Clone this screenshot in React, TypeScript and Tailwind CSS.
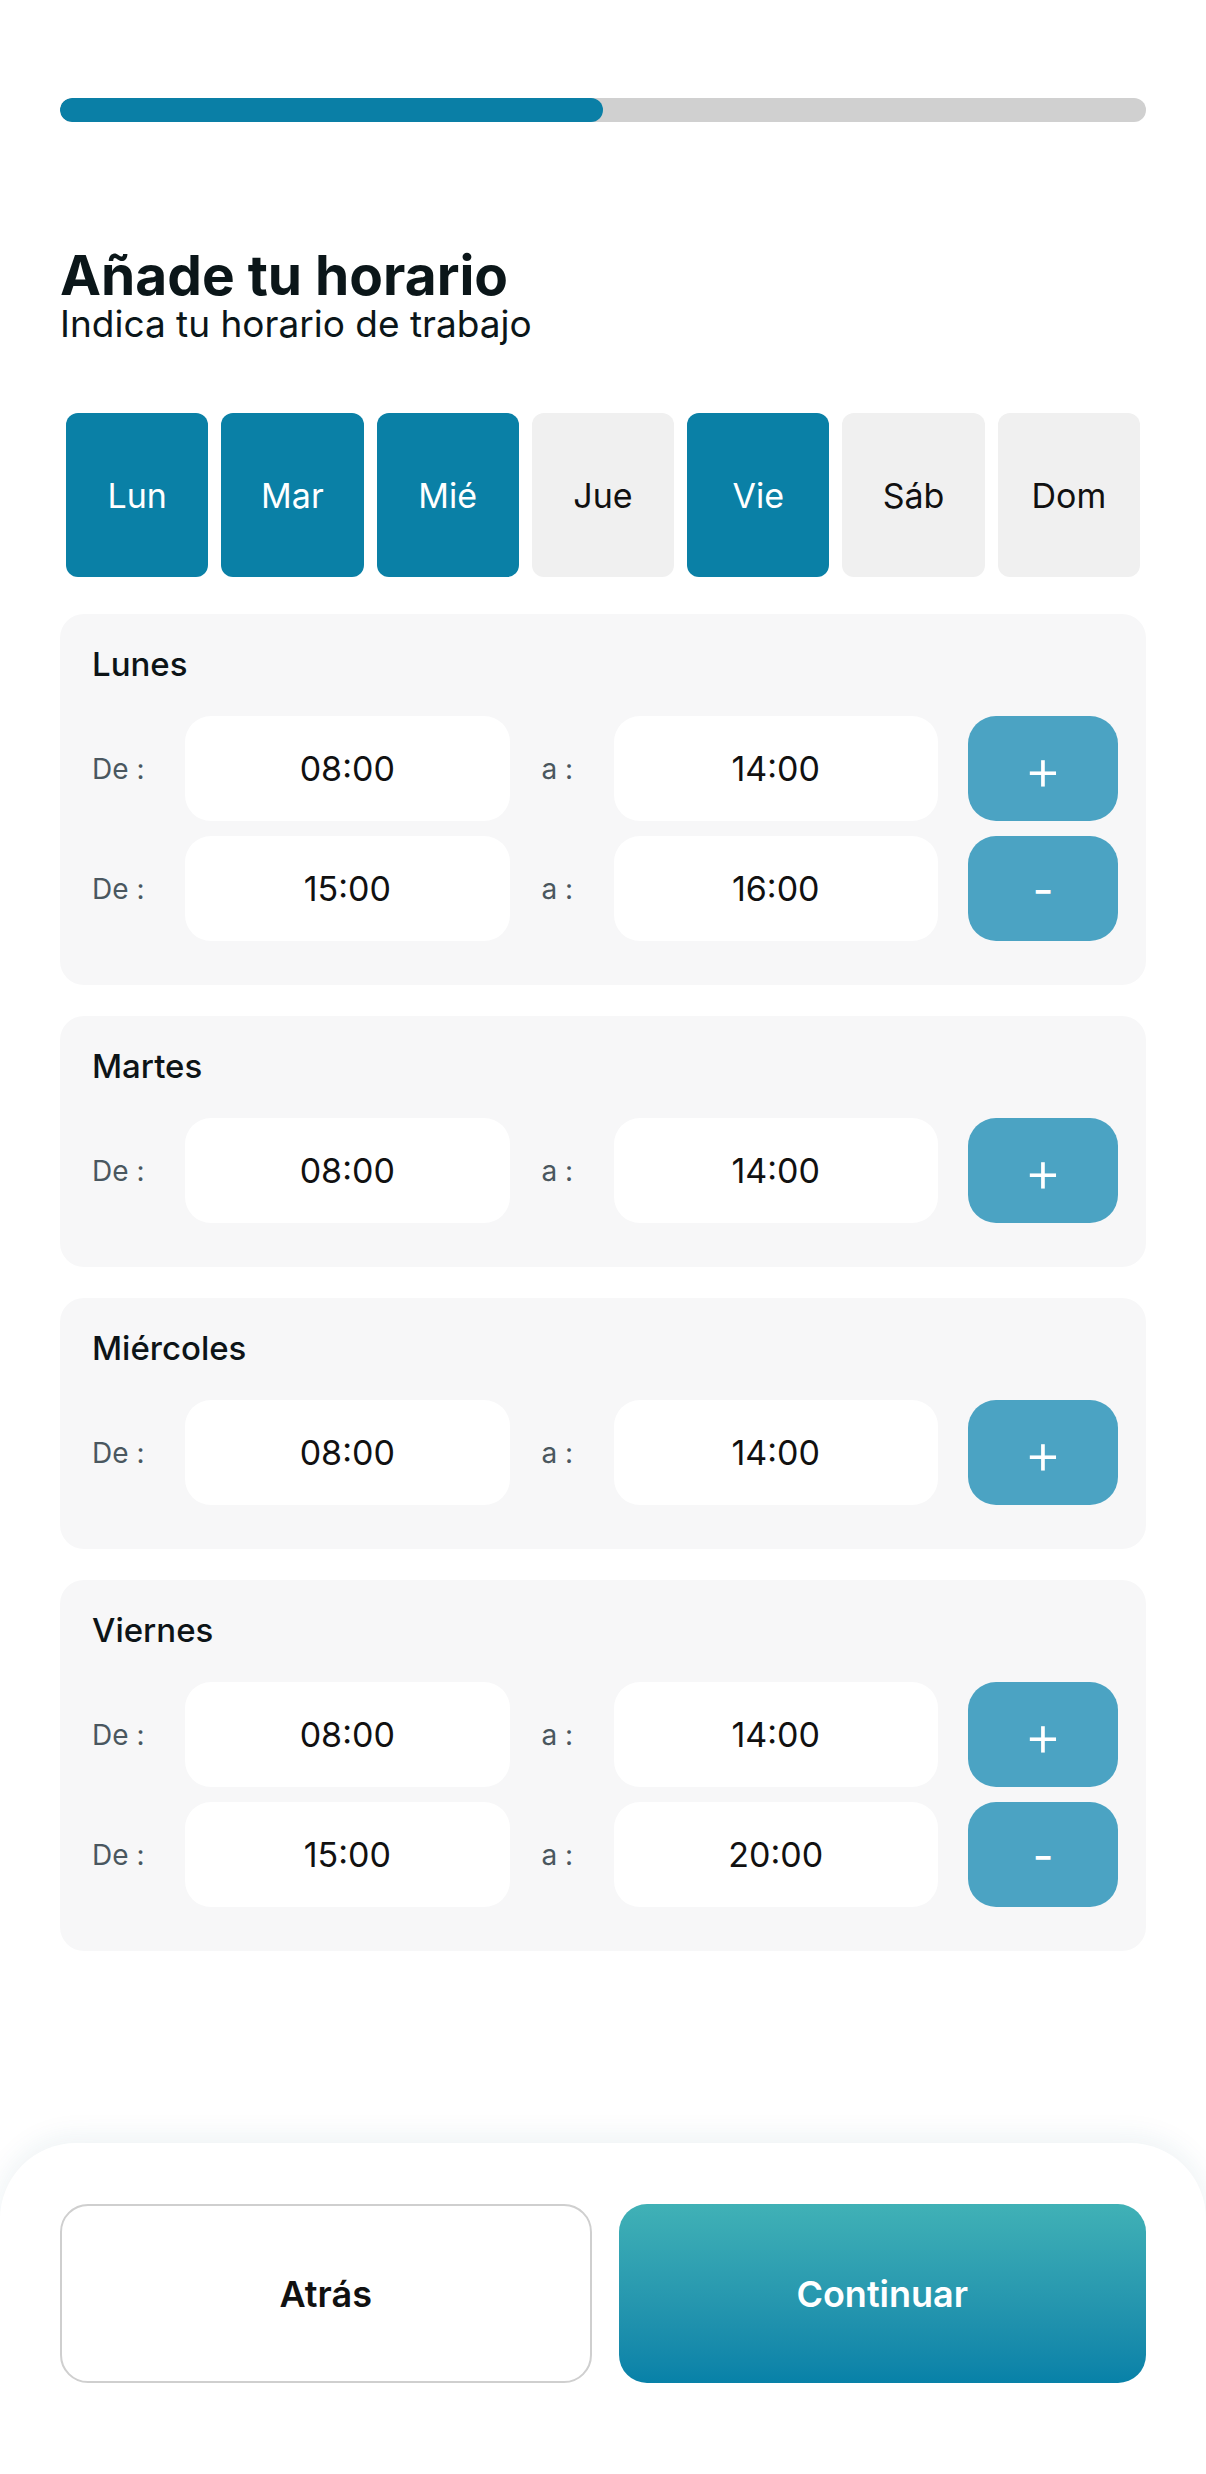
import React from 'react';

type Slot = { from: string; to: string };
type Day = { name: string; slots: Slot[] };

const weekDays = [
  { short: 'Lun', active: true },
  { short: 'Mar', active: true },
  { short: 'Mié', active: true },
  { short: 'Jue', active: false },
  { short: 'Vie', active: true },
  { short: 'Sáb', active: false },
  { short: 'Dom', active: false },
];

const schedule: Day[] = [
  { name: 'Lunes', slots: [{ from: '08:00', to: '14:00' }, { from: '15:00', to: '16:00' }] },
  { name: 'Martes', slots: [{ from: '08:00', to: '14:00' }] },
  { name: 'Miércoles', slots: [{ from: '08:00', to: '14:00' }] },
  { name: 'Viernes', slots: [{ from: '08:00', to: '14:00' }, { from: '15:00', to: '20:00' }] },
];

function TimeBox({ value }: { value: string }) {
  return (
    <div className="flex-1 h-[105px] rounded-[26px] bg-white flex items-center justify-center text-[34px] text-[#111]">
      {value}
    </div>
  );
}

function DayCard({ day }: { day: Day }) {
  return (
    <div className="bg-[#f7f7f8] rounded-[24px] pl-[32px] pr-[28px] pt-[30px] pb-[44px]">
      <div className="text-[33px] leading-[40px] font-medium text-[#0d1417]">{day.name}</div>
      <div className="mt-[32px] flex flex-col gap-[15px]">
        {day.slots.map((slot, i) => (
          <div key={i} className="flex items-center">
            <span className="w-[93px] text-[28px] text-[#4a575f]">De :</span>
            <TimeBox value={slot.from} />
            <span className="w-[104px] pl-[32px] text-[28px] text-[#4a575f]">a :</span>
            <TimeBox value={slot.to} />
            <button className="ml-[30px] w-[150px] h-[105px] rounded-[28px] bg-[#4ba3c3] text-white flex items-center justify-center">
              {i === 0 ? (
                <span className="text-[58px] leading-none font-light">+</span>
              ) : (
                <span className="text-[46px] leading-none">-</span>
              )}
            </button>
          </div>
        ))}
      </div>
    </div>
  );
}

export default function App() {
  return (
    <div className="min-h-screen flex flex-col bg-white font-['Inter','Noto_Sans',sans-serif]">
      <div className="flex-1 px-[60px] pt-[98px]">
        <div className="h-[24px] rounded-full bg-[#d0d0d0] overflow-hidden">
          <div className="h-full w-1/2 rounded-full bg-[#0a7fa6]" />
        </div>

        <div className="mt-[124px]">
          <h1 className="text-[55px] leading-[58px] font-bold text-[#0b1619]">Añade tu horario</h1>
          <p className="text-[37px] leading-[40px] text-[#0b1619]">Indica tu horario de trabajo</p>
        </div>

        <div className="mt-[69px] px-[6px] flex gap-[13px]">
          {weekDays.map((d) => (
            <button
              key={d.short}
              className={
                d.active
                  ? 'flex-1 h-[164px] rounded-[12px] bg-[#0a80a6] text-white text-[34px]'
                  : 'flex-1 h-[164px] rounded-[12px] bg-[#f0f0f0] text-[#111] text-[34px]'
              }
            >
              {d.short}
            </button>
          ))}
        </div>

        <div className="mt-[37px] flex flex-col gap-[31px]">
          {schedule.map((day) => (
            <DayCard key={day.name} day={day} />
          ))}
        </div>
      </div>

      <div className="mt-[60px] bg-white rounded-t-[76px] shadow-[0_-6px_28px_rgba(20,90,110,0.08)] px-[60px] pt-[61px] pb-[91px] flex gap-[27px]">
        <button className="flex-1 h-[179px] rounded-[28px] border-2 border-[#cfcfcf] bg-white text-[36px] font-semibold text-[#111]">
          Atrás
        </button>
        <button className="flex-1 h-[179px] rounded-[28px] bg-gradient-to-b from-[#40b1b6] to-[#0781a8] text-[36px] font-semibold text-white">
          Continuar
        </button>
      </div>
    </div>
  );
}
